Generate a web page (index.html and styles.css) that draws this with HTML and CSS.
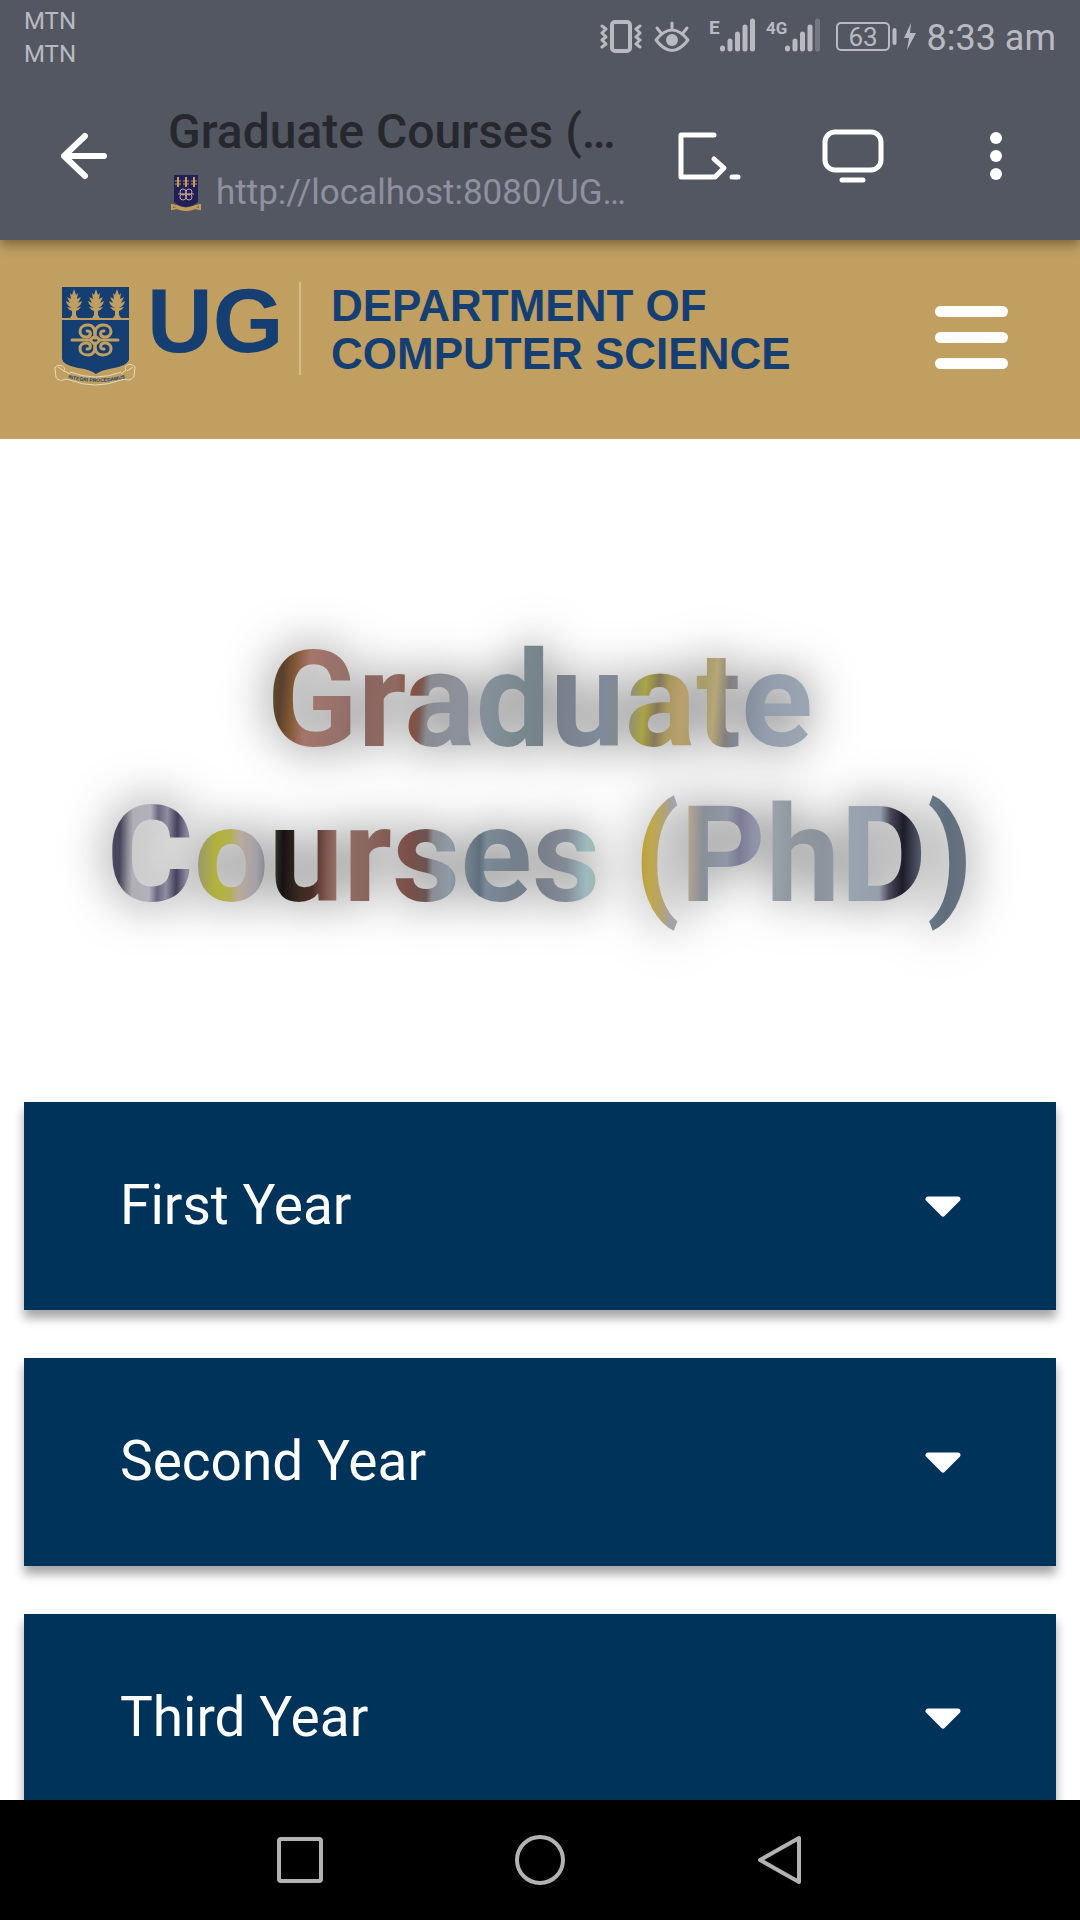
FILE: index.html
```html
<!DOCTYPE html>
<html lang="en">
<head>
<meta charset="utf-8">
<meta name="viewport" content="width=device-width, initial-scale=1">
<title>Graduate Courses (PhD)</title>
<link rel="stylesheet" href="styles.css">
</head>
<body>
<div class="screen">
  <div class="status">
    <div class="carriers"><span>MTN</span><span>MTN</span></div>
    <div class="indicators">
      <svg class="status-icons" viewBox="600 8 320 56" aria-hidden="true">
        <g fill="none" stroke="#b9bac1" stroke-width="4" stroke-linecap="round" stroke-linejoin="round">
          <rect x="612" y="22" width="18" height="29" rx="3"/>
          <path stroke-width="3" d="M602 26l4 3-4 4 4 4-4 3 4 4-4 3M640 26l-4 3 4 4-4 4 4 3-4 4 4 3"/>
          <path stroke-width="3" d="M656 40q16-20 32 0q-16 21-32 0zM657 28l4 5M672 23v6M687 28l-4 5"/>
        </g>
        <circle cx="672" cy="40" r="6" fill="#b9bac1"/>
        <g stroke="#b9bac1" stroke-width="5" stroke-linecap="round">
          <path d="M722.500 48v1M730 41v8M737.500 34v15M745 27v22M752.500 21v28M787.500 48v1M795 41v8M802.500 34v15M810 27v22"/>
          <path stroke="#757783" d="M817.500 21v28"/>
        </g>
        <rect x="837" y="23" width="52" height="27" rx="4" fill="none" stroke="#b9bac1" stroke-width="2"/>
        <path d="M894.500 30v13" stroke="#b9bac1" stroke-width="4" stroke-linecap="round"/>
        <path d="M911 23l-7 15h5l-2 12 9-17h-6z" fill="#b9bac1"/>
        <g fill="#b9bac1" font-family="Roboto, sans-serif">
          <text x="709" y="34" font-size="19" font-weight="700">E</text>
          <text x="766" y="34" font-size="17" font-weight="700">4G</text>
          <text x="863" y="46" font-size="26" text-anchor="middle">63</text>
        </g>
      </svg>
      <span class="clock">8:33 am</span>
    </div>
  </div>

  <div class="toolbar">
    <button class="icon-btn" aria-label="Back">
      <svg width="48" height="48" viewBox="0 0 48 48" fill="none" stroke="#fff" stroke-width="6" stroke-linecap="round" stroke-linejoin="round"><path d="M25 4L4 24l21 20M4 24h40"/></svg>
    </button>
    <div class="page-info">
      <div class="page-title">Graduate Courses (…</div>
      <div class="page-url">
        <svg class="favicon" viewBox="0 0 30 36" aria-hidden="true">
          <path d="M3 0h24v27q-4 4-12 5-8-1-12-5z" fill="#211f55"/>
          <g stroke="#c49c58" fill="none">
            <path d="M7 2v10M15 2v10M23 2v10" stroke-width="2"/>
            <path d="M4 6h6M4 9h6M12 6h6M12 9h6M20 6h6M20 9h6"/>
            <path stroke="#c7a3a0" d="M7 19h16"/>
            <g stroke="#c7a3a0" stroke-width="1"><circle cx="12" cy="17" r="3"/><circle cx="18" cy="17" r="3"/><circle cx="12" cy="22" r="3"/><circle cx="18" cy="22" r="3"/></g>
            <path d="M1 30v4l5-1q9 4 18 0l5 1v-4l-4 1q-10 5-20 0z" stroke-width="2"/>
          </g>
        </svg>
        <span class="url">http://localhost:8080/UG…</span>
      </div>
    </div>
    <div class="tools">
      <button class="icon-btn" aria-label="Console">
        <svg width="64" height="48" viewBox="0 0 64 48" fill="none" stroke="#fff" stroke-width="5" stroke-linecap="round" stroke-linejoin="round"><path d="M36 3H3v42h34l9-9-10-9M54 45h6"/></svg>
      </button>
      <button class="icon-btn" aria-label="Desktop view">
        <svg width="62" height="54" viewBox="0 0 62 54" fill="none" stroke="#fff" stroke-width="5" stroke-linecap="round"><rect x="3" y="3" width="56" height="38" rx="10"/><path d="M20 51h21"/></svg>
      </button>
      <button class="icon-btn" aria-label="More options">
        <svg width="12" height="48" viewBox="0 0 12 48" fill="#fff"><circle cx="6" cy="6" r="6"/><circle cx="6" cy="24" r="6"/><circle cx="6" cy="42" r="6"/></svg>
      </button>
    </div>
  </div>

  <div class="page">
    <header class="site-header">
      <a class="brand" href="#">
        <svg class="crest" viewBox="0 0 84 100" aria-hidden="true">
          <path d="M8 1h67v73q-3 6-15 8-13 2-18 6-7-5-18-6Q9 79 8 73z" fill="#153f72"/>
          <path d="M8 33h67" stroke="#c09f61" stroke-width="2"/>
          <g fill="#c09f61">
            <path id="tree" d="M20 3l2 6 2-2-1 6 4-2-3 6 4-2q-1 5-6 7l5-1q-2 3-5 4v4l2 3h-8l2-3v-4q-3-1-5-4l5 1q-5-2-6-7l4 2-3-6 4 2-1-6 2 2z"/>
            <use href="#tree" x="22"/>
            <use href="#tree" x="43"/>
          </g>
          <g fill="none" stroke="#c09f61" stroke-width="3" stroke-linecap="round">
            <path d="M18 54h18l5-4 5 4h18M36 54l5 5 5-5M41 50V44M41 59v6"/>
            <path d="M41 52Q42 39 34 39c-11 0-10 13-1 12 5-1 4-7 0-6M41 52Q40 39 49 39c11 0 10 13 1 12-5-1-4-7 0-6M41 57Q42 69 34 69c-11 0-10-13-1-12 5 1 4 7 0 6M41 57Q40 69 49 69c11 0 10-13 1-12-5 1-4 7 0 6"/>
          </g>
          <g fill="none" stroke="#e6dabd" stroke-width="1">
            <path d="M16 88l-6-3c3-5-7-8-9-3l1 9c2 4 7 4 9 2l5 1q25 10 51 0l4-1c3 2 7 1 9-3l1-9c-3-5-12-2-9 3l-5 4M16 86q26 10 51 0"/>
            <path d="M4 81l6 4M79 81l-6 4"/>
          </g>
          <path id="scroll" d="M14 92q28 8 58 0" fill="none"/>
          <text font-family="Liberation Sans, sans-serif" font-size="5" font-weight="700" fill="#153f72"><textPath href="#scroll">INTEGRI PROCEDAMUS</textPath></text>
        </svg>
        <span class="brand-ug">UG</span>
        <span class="brand-dept">DEPARTMENT OF<br>COMPUTER SCIENCE</span>
      </a>
      <button class="menu-btn" aria-label="Menu"><span></span><span></span><span></span></button>
    </header>

    <main>
      <h1 class="hero"><span class="hero-line hero-top">Graduate</span> <span class="hero-line hero-bottom">Courses (PhD)</span></h1>
      <div class="years">
        <button class="year">First Year<svg class="caret" viewBox="0 0 36 22" aria-hidden="true"><path d="M3 3h30L18 18z"/></svg></button>
        <button class="year">Second Year<svg class="caret" viewBox="0 0 36 22" aria-hidden="true"><path d="M3 3h30L18 18z"/></svg></button>
        <button class="year">Third Year<svg class="caret" viewBox="0 0 36 22" aria-hidden="true"><path d="M3 3h30L18 18z"/></svg></button>
      </div>
    </main>
  </div>

  <nav class="sysnav" aria-label="System">
    <button class="icon-btn" aria-label="Recent apps"><svg width="50" height="50" viewBox="0 0 50 50"><rect x="4" y="4" width="42" height="42" rx="2"/></svg></button>
    <button class="icon-btn" aria-label="Home"><svg width="50" height="50" viewBox="0 0 50 50"><circle cx="25" cy="25" r="23"/></svg></button>
    <button class="icon-btn" aria-label="Back"><svg width="50" height="50" viewBox="0 0 50 50"><path d="M44 3v44L5 25z"/></svg></button>
  </nav>
</div>
</body>
</html>
```
FILE: styles.css
```css
* { box-sizing: border-box; }

body {
  margin: 0;
  background: #fff;
  font-family: Roboto, sans-serif;
}

button {
  border: 0;
  padding: 0;
  background: none;
  font: inherit;
  color: inherit;
}

svg { display: block; }

.screen {
  display: flex;
  flex-direction: column;
  height: 100vh;
}

/* phone status bar */
.status {
  position: relative;
  z-index: 2;
  display: flex;
  flex-shrink: 0;
  justify-content: space-between;
  height: 72px;
  padding: 4px 24px 0;
  background: #535762;
  color: #b9bac1;
}

.carriers {
  display: flex;
  flex-direction: column;
  padding-top: 1px;
  font-size: 24px;
  line-height: 33px;
}

.indicators {
  display: flex;
  gap: 7px;
  padding-top: 4px;
}

.status-icons {
  width: 320px;
  height: 56px;
}

.clock {
  padding-top: 10px;
  font-size: 36px;
  line-height: 40px;
}

/* browser toolbar */
.toolbar {
  position: relative;
  z-index: 1;
  display: flex;
  flex-shrink: 0;
  align-items: center;
  height: 168px;
  padding: 0 78px 0 60px;
  background: #535762;
  box-shadow: 0 4px 12px rgba(0, 0, 0, 0.4);
}

.icon-btn {
  display: grid;
  place-items: center;
}

.page-info {
  flex: 1;
  min-width: 0;
  margin: 0 40px 0 60px;
  padding-top: 10px;
}

.page-title {
  color: #26282e;
  font-size: 48px;
  font-weight: 500;
  line-height: 64px;
  white-space: nowrap;
}

.page-url {
  display: flex;
  align-items: center;
  gap: 15px;
  padding-left: 3px;
}

.favicon {
  flex-shrink: 0;
  width: 30px;
  height: 36px;
}

.url {
  color: #8f90a0;
  font-size: 35px;
  line-height: 58px;
  white-space: nowrap;
}

.tools {
  display: flex;
  align-items: center;
}

.tools .icon-btn + .icon-btn { margin-left: 80px; }
.tools .icon-btn:last-child { margin-left: 106px; }

/* site */
.page {
  flex: 1;
  min-height: 0;
  overflow: hidden;
}

.site-header {
  display: flex;
  align-items: flex-start;
  justify-content: space-between;
  height: 199px;
  padding: 42px 72px 0 54px;
  background: #c09f61;
}

.brand {
  display: flex;
  color: #153f72;
  font-family: "Liberation Sans", Arial, sans-serif;
  font-weight: 700;
  text-decoration: none;
}

.crest {
  width: 84px;
  height: 100px;
  margin-top: 4px;
}

.brand-ug {
  width: 152px;
  margin-left: 9px;
  font-size: 91px;
  line-height: 78px;
}

.brand-dept {
  height: 93px;
  padding-left: 30px;
  border-left: 2px solid #d3bc8d;
  font-size: 44px;
  line-height: 48px;
  white-space: nowrap;
}

.menu-btn {
  display: flex;
  flex-direction: column;
  gap: 15px;
  width: 73px;
  margin-top: 24px;
}

.menu-btn span {
  height: 11px;
  border-radius: 6px;
  background: #fff;
}

.hero {
  display: flex;
  flex-direction: column;
  align-items: center;
  margin: 0;
  padding: 184px 24px 169px;
  font-size: 133px;
  font-weight: 700;
  line-height: 155px;
  filter: drop-shadow(0 0 24px rgba(0, 0, 0, 0.56));
}

.hero-line {
  background-clip: text;
  -webkit-background-clip: text;
  color: transparent;
  white-space: nowrap;
}

.hero-top {
  background-image: linear-gradient(95deg,
    #5b5220 7px, #5a4030 20px, #7d5530 30px, #a5756a 46px, #94716a 83px,
    #8a6560 100px, #8f6a62 133px, #84503f 153px, #7a5a52 160px, #8a8c92 168px,
    #8d919c 200px, #828f98 233px, #77868d 266px, #787f8b 293px, #7f8b9b 346px,
    #868a80 365px, #aaa345 383px, #86785a 396px, #a8985f 406px, #b9a06e 420px,
    #a79c6c 440px, #b5a777 453px, #858080 466px, #808b99 480px, #939dab 506px,
    #9aa4b2 540px);
}

.hero-bottom {
  background-image: linear-gradient(91deg,
    #4a4860 7px, #46455a 14px, #8c8a94 22px, #b0aeb6 27px, #b4b0bc 44px,
    #6a6880 52px, #8f8da2 61px, #45415c 71px, #8c88a0 81px, #9a9a6a 93px,
    #b2b23a 111px, #b5b04f 124px, #b8ab9c 134px, #a5a0a8 151px, #8a8a92 159px,
    #2a3020 171px, #181214 177px, #3a2a20 194px, #4a2c28 207px, #80584e 221px,
    #966f66 231px, #8a6660 261px, #7a4f48 304px, #6a5552 321px, #8a8c95 327px,
    #8f9ba6 344px, #606f7d 374px, #7b8a98 381px, #74808c 407px, #787f8b 434px,
    #838b97 461px, #9dbcc0 481px, #b8a040 534px, #c0a84a 544px, #b5a470 557px,
    #a0a2b0 567px, #b8a890 581px, #8a8f98 597px, #9097a5 621px, #7c7c96 634px,
    #9090a8 647px, #99a2ac 667px, #90979f 687px, #8b939c 717px, #9aa4b0 744px,
    #969fad 774px, #4a4858 784px, #1e1c28 797px, #4a4c60 811px, #6a7888 824px,
    #5f6d7c 841px, #6a7480 859px);
}

.years {
  display: flex;
  flex-direction: column;
  gap: 48px;
  padding: 0 24px 48px;
}

.year {
  display: flex;
  align-items: center;
  justify-content: space-between;
  height: 208px;
  padding: 0 95px 2px 96px;
  background: #003359;
  box-shadow: 0 8px 10px rgba(0, 0, 0, 0.36);
  color: #fff;
  font-size: 55px;
}

.caret {
  width: 36px;
  height: 22px;
  margin-top: 4px;
  fill: #fff;
  stroke: #fff;
  stroke-width: 5px;
  stroke-linejoin: round;
}

/* phone navigation bar */
.sysnav {
  display: flex;
  flex-shrink: 0;
  align-items: center;
  justify-content: center;
  gap: 190px;
  height: 120px;
  background: #000;
}

.sysnav svg {
  fill: none;
  stroke: #b2b2b2;
  stroke-width: 4px;
  stroke-linejoin: round;
}
```
